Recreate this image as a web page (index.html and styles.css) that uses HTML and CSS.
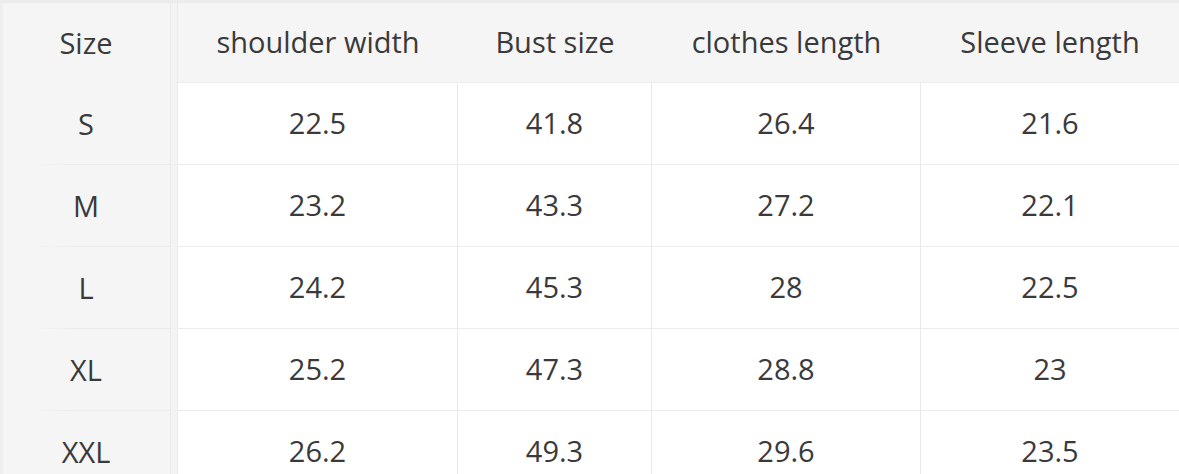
FILE: index.html
```html
<!DOCTYPE html>
<html>
<head>
<meta charset="utf-8">
<link rel="stylesheet" href="styles.css">
</head>
<body>
<div class="frame">
  <div class="chart">
    <div class="cell size head">Size</div>
    <div class="cell head">shoulder width</div>
    <div class="cell head">Bust size</div>
    <div class="cell head">clothes length</div>
    <div class="cell head last">Sleeve length</div>

    <div class="cell size">S</div>
    <div class="cell">22.5</div>
    <div class="cell">41.8</div>
    <div class="cell">26.4</div>
    <div class="cell last">21.6</div>

    <div class="cell size">M</div>
    <div class="cell">23.2</div>
    <div class="cell">43.3</div>
    <div class="cell">27.2</div>
    <div class="cell last">22.1</div>

    <div class="cell size">L</div>
    <div class="cell">24.2</div>
    <div class="cell">45.3</div>
    <div class="cell">28</div>
    <div class="cell last">22.5</div>

    <div class="cell size">XL</div>
    <div class="cell">25.2</div>
    <div class="cell">47.3</div>
    <div class="cell">28.8</div>
    <div class="cell last">23</div>

    <div class="cell size">XXL</div>
    <div class="cell">26.2</div>
    <div class="cell">49.3</div>
    <div class="cell">29.6</div>
    <div class="cell last">23.5</div>
  </div>
</div>
</body>
</html>
```
FILE: styles.css
```css
html, body {
  margin: 0;
  padding: 0;
  background: #ffffff;
}
.frame {
  width: 1179px;
  height: 474px;
  overflow: hidden;
  box-sizing: border-box;
  border-top: 3px solid #ececec;
  padding-left: 3px;
  background: #efefef;
}
.chart {
  display: grid;
  grid-template-columns: 175px 280px 194px 269px 258px;
  grid-template-rows: 80px repeat(5, 82px);
  font-family: "Open Sans", "Noto Sans", sans-serif;
  font-size: 29px;
  color: #3a3a3a;
  background: #ffffff;
}
.cell {
  display: flex;
  align-items: center;
  justify-content: center;
  border-right: 1px solid #e9e9e9;
  border-bottom: 1px solid #ececec;
  background: #ffffff;
  padding-bottom: 2px;
  box-sizing: border-box;
}
.cell.head {
  background: #f5f5f5;
  border-bottom: 1px solid #eeeeee;
  border-right: none;
}
.cell.last {
  border-right: none;
}
.cell.size {
  padding-right: 8px;
  border-right: 1px solid #ebebeb;
  border-bottom: none;
  background:
    linear-gradient(to right, rgba(236,236,236,0) 30px, #ebebeb 70px) left bottom / 100% 1px no-repeat,
    #f5f5f5;
  box-shadow: inset -6px 0 0 #f3f3f3, inset -7px 0 0 #e9e9e9;
}
.cell.size.head {
  background: #f5f5f5;
  border-right: 1px solid #ebebeb;
}
```
